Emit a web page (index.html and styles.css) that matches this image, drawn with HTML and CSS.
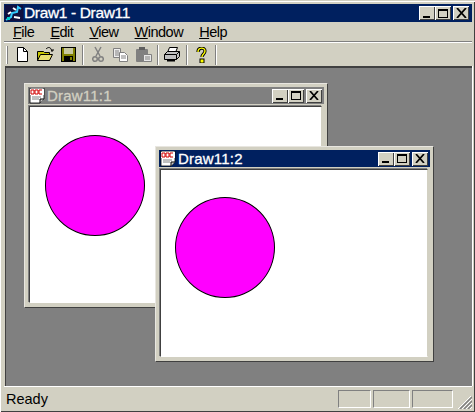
FILE: index.html
```html
<!DOCTYPE html>
<html lang="en">
<head>
<meta charset="utf-8">
<title>Draw1 - Draw11</title>
<link rel="stylesheet" href="styles.css">
</head>
<body>
<div class="app">
  <div class="titlebar">
    <svg class="app-icon" width="18" height="16" viewBox="0 0 18 16"><rect width="18" height="16" fill="#101040"/><path d="M1 15l5-3 1-4 5-1 1-5 3 2" fill="none" stroke="#3cf" stroke-width="2"/><path d="M3 9l3-2M8 3l3 2M9 12l6 1" stroke="#fff" stroke-width="2"/><rect x="2" y="12" width="3" height="3" fill="#0cc"/></svg>
    <span class="title-text">Draw1 - Draw11</span>
    <div class="caps caps-main">
      <span class="cap"><i class="min"></i></span><span class="cap"><i class="max"></i></span><span class="cap cap-close"><svg width="11" height="10" viewBox="0 0 11 10"><path d="M1 0l9 10M10 0l-9 10" stroke="#000" stroke-width="1.8"/></svg></span>
    </div>
  </div>
  <nav class="menubar">
    <span><u>F</u>ile</span><span><u>E</u>dit</span><span><u>V</u>iew</span><span><u>W</u>indow</span><span><u>H</u>elp</span>
  </nav>
  <div class="toolbar">
    <span class="gripper"></span>
    <span class="tool"><svg width="13" height="15" viewBox="0 0 13 15"><path d="M1.500.5h6l4 4v10h-10z" fill="#fff" stroke="#000"/><path d="M7.500.5v4h4" fill="none" stroke="#000"/></svg></span>
    <span class="tool"><svg width="17" height="15" viewBox="0 0 17 15"><path d="M.5 4.500h6l1 1h5v8H.5z" fill="#c8c800" stroke="#000"/><path d="M.5 13.500l3-6h12l-3 6z" fill="#e8e070" stroke="#000"/><path d="M9 2c2-2 4-2 5 0l1 2m1-2v2h-2" fill="none" stroke="#000"/></svg></span>
    <span class="tool"><svg width="15" height="15" viewBox="0 0 15 15"><rect x=".5" y=".5" width="14" height="14" fill="#808000" stroke="#000"/><rect x="3" y="1" width="9" height="6" fill="#c8c8a0"/><rect x="3" y="9" width="9" height="5" fill="#000"/><rect x="9" y="10" width="2" height="3" fill="#808000"/></svg></span>
    <span class="sep"></span>
    <span class="tool"><svg width="12" height="17" viewBox="0 0 12 17"><path d="M3 1l5 9M9 1l-5 9" stroke="#808080" stroke-width="1.500"/><circle cx="3" cy="13" r="2.300" fill="none" stroke="#808080" stroke-width="1.500"/><circle cx="9" cy="13" r="2.300" fill="none" stroke="#808080" stroke-width="1.500"/></svg></span>
    <span class="tool"><svg width="16" height="14" viewBox="0 0 16 14"><path d="M.5.5h7v9h-7z" fill="#eee" stroke="#808080"/><path d="M6.500 4.500h5l3 3v6h-8z" fill="#fff" stroke="#808080"/><path d="M2 3h4M2 5h4M2 7h4M8 8h5M8 10h5" stroke="#808080"/></svg></span>
    <span class="tool"><svg width="16" height="15" viewBox="0 0 16 15"><rect y="2" width="12" height="13" rx="1" fill="#808080"/><rect x="3" width="6" height="3" fill="#606060"/><path d="M7.500 7.500h8v7h-8z" fill="#e8e8e8" stroke="#808080"/><path d="M9 10h5M9 12h5" stroke="#808080"/></svg></span>
    <span class="sep"></span>
    <span class="tool"><svg width="17" height="15" viewBox="0 0 17 15"><path d="M5.500.5h8l-2 5h-8z" fill="#fff" stroke="#000"/><path d="M.5 7.500l3-3h12v5l-3 3H.5z" fill="#c0c0c0" stroke="#000"/><path d="M.5 7.500h12v5M12.500 7.500l3-3" fill="none" stroke="#000"/><path d="M3 13.500h8" stroke="#000" stroke-width="2"/></svg></span>
    <span class="sep"></span>
    <span class="tool"><svg width="11" height="16" viewBox="0 0 11 16"><path d="M2 5c0-5 7-5 7-1 0 3-3 3-3 6" fill="none" stroke="#000" stroke-width="3.200"/><path d="M2 5c0-5 7-5 7-1 0 3-3 3-3 6" fill="none" stroke="#ff0" stroke-width="1.400"/><rect x="4" y="12" width="4" height="4" fill="#ff0" stroke="#000"/></svg></span>
    <span class="sep"></span>
  </div>
  <main class="mdi">
    <section class="child child-back">
      <header class="child-title">
        <svg class="doc-icon" width="16" height="16" viewBox="0 0 16 16"><use href="#doc"/></svg>
        <span class="child-name">Draw11:1</span>
        <div class="caps"><span class="cap"><i class="min"></i></span><span class="cap"><i class="max"></i></span><span class="cap cap-close"><svg width="10" height="9" viewBox="0 0 10 9"><path d="M1 0l8 9M9 0l-8 9" stroke="#000" stroke-width="1.700"/></svg></span></div>
      </header>
      <div class="canvas"><div class="circle"></div></div>
    </section>
    <section class="child child-front">
      <header class="child-title">
        <svg class="doc-icon" width="16" height="16" viewBox="0 0 16 16"><use href="#doc"/></svg>
        <span class="child-name">Draw11:2</span>
        <div class="caps"><span class="cap"><i class="min"></i></span><span class="cap"><i class="max"></i></span><span class="cap cap-close"><svg width="10" height="9" viewBox="0 0 10 9"><path d="M1 0l8 9M9 0l-8 9" stroke="#000" stroke-width="1.700"/></svg></span></div>
      </header>
      <div class="canvas"><div class="circle"></div></div>
    </section>
  </main>
  <footer class="statusbar">
    <span class="status-text">Ready</span>
    <span class="panel p1"></span><span class="panel p2"></span><span class="panel p3"></span>
    <svg class="grip" width="14" height="13" viewBox="0 0 14 13"><path d="M2 13L14 1M6 13l8-8M10 13l4-4" stroke="#808080" stroke-width="1.500"/><path d="M0 13L14-1M4 13L14 3M8 13l6-6M12 13l2-2" stroke="#fff"/></svg>
  </footer>
</div>
<svg class="defs" width="0" height="0"><defs><g id="doc"><path d="M1 0h14v11l-4 4H1z" fill="#fff" stroke="#000" stroke-width=".8"/><path d="M11 15v-4h4" fill="#ccc" stroke="#000"/><rect x="1" y="1" width="14" height="6" fill="#fff"/><path d="M2 2h3v4H2zM6 2h3v4H6zM13 2h-3v4h3" fill="none" stroke="#d00000"/><path d="M3 9h9M3 11h7" stroke="#808080"/></g></defs></svg>
</body>
</html>
```
FILE: styles.css
```css
html, body {
  margin: 0;
  padding: 0;
  background: #d2d0c2;
}
.app {
  box-sizing: border-box;
  width: 475px;
  height: 412px;
  padding: 4px 3px 2px 4px;
  display: flex;
  flex-direction: column;
  background: #d2d0c2;
  border-top: 1px solid #d2d0c2;
  box-shadow: inset 1px 1px 0 #fff, inset -1px -1px 0 #404040;
  font-family: "Liberation Sans", Arial, sans-serif;
  overflow: hidden;
}
.titlebar {
  height: 18px;
  flex: none;
  margin-top: -1px;
  display: flex;
  align-items: center;
  background: #00205f;
  color: #fff;
  padding: 0 3px 0 1px;
}
.app-icon { flex: none; }
.title-text {
  margin-left: 1px;
  font-size: 15.500px;
  letter-spacing: -.35px;
  -webkit-text-stroke: .3px #fff;
  flex: 1;
  white-space: nowrap;
}
.caps {
  display: flex;
  flex: none;
  margin-left: auto;
}
.cap {
  box-sizing: border-box;
  width: 16px;
  height: 14px;
  background: #d2d0c2;
  display: flex;
  align-items: center;
  justify-content: center;
  box-shadow: inset 1px 1px 0 #fff, inset -1px -1px 0 #404040;
}
.cap-close { margin-left: 2px; }
.min {
  width: 7px;
  height: 2px;
  background: #000;
  margin-top: 7px;
  margin-right: 1px;
}
.max {
  box-sizing: border-box;
  width: 10px;
  height: 9px;
  border: 1px solid #000;
  border-top-width: 2px;
}
.menubar {
  height: 20px;
  flex: none;
  display: flex;
  align-items: center;
  font-size: 14.500px;
  letter-spacing: -.5px;
  color: #000;
  padding-left: 9px;
  gap: 16px;
}
.menubar span { white-space: nowrap; }
.toolbar {
  height: 23px;
  flex: none;
  display: flex;
  align-items: center;
  border-top: 1px solid #fff;
  box-shadow: 0 -1px 0 #808080;
  padding-left: 2px;
}
.gripper {
  width: 1px;
  height: 18px;
  background: #fff;
  border-right: 1px solid #808080;
  margin-right: 3px;
}
.tool {
  width: 23px;
  display: flex;
  justify-content: center;
  align-items: center;
}
.sep {
  box-sizing: border-box;
  width: 2px;
  height: 20px;
  margin: 0 2px;
  background: #fff;
  border-left: 1px solid #808080;
}
.mdi {
  flex: 1;
  margin-left: 1px;
  position: relative;
  background: #808080;
  border-top: 2px solid #404040;
  border-left: 1px solid #404040;
  box-shadow: 1px 0 0 #fff;
}
.child {
  position: absolute;
  box-sizing: border-box;
  display: flex;
  flex-direction: column;
  background: #d2d0c2;
  padding: 3px;
  border: 1px solid;
  border-color: #e8e6e0 #404040 #404040 #e8e6e0;
}
.child-back { left: 18px; top: 15px; width: 304px; height: 225px; }
.child-front { left: 149px; top: 78px; width: 279px; height: 216px; }
.child-title {
  height: 17px;
  flex: none;
  display: flex;
  align-items: center;
  padding-right: 2px;
  margin-bottom: 2px;
  color: #fff;
}
.child-back .child-title { background: #808080; color: #d2d0c2; }
.child-front .child-title { background: #00205f; }
.doc-icon { flex: none; margin: 0 2px 0 1px; }
.child-name {
  font-size: 15px;
  letter-spacing: .2px;
  -webkit-text-stroke: .3px currentColor;
  white-space: nowrap;
}
.canvas {
  flex: 1;
  position: relative;
  background: #fff;
  margin: 0 2px 1px 1px;
  border: 1px solid;
  border-color: #404040 #d2d0c2 #fff #404040;
  box-shadow: -1px -1px 0 #808080;
}
.circle {
  position: absolute;
  box-sizing: border-box;
  width: 100px;
  height: 101px;
  border-radius: 50%;
  background: #f0f;
  border: 1px solid #000;
}
.child-back .circle { left: 15px; top: 28px; }
.child-front .circle { left: 14px; top: 27px; }
.statusbar {
  height: 24px;
  flex: none;
  display: flex;
  align-items: stretch;
  padding: 3px 0 2px;
  position: relative;
  border-top: 1px solid #fff;
  box-sizing: border-box;
}
.status-text {
  font-size: 14.500px;
  line-height: 18px;
  padding-left: 2px;
  margin-right: auto;
}
.panel {
  box-sizing: border-box;
  border: 1px solid;
  border-color: #808080 #fff #fff #808080;
  margin-left: 2px;
}
.p1 { width: 33px; }
.p2 { width: 37px; }
.p3 { width: 41px; }
.panel.p3 { margin-right: 19px; }
.grip {
  position: absolute;
  right: 0;
  bottom: 1px;
}
.defs { position: absolute; }
```
